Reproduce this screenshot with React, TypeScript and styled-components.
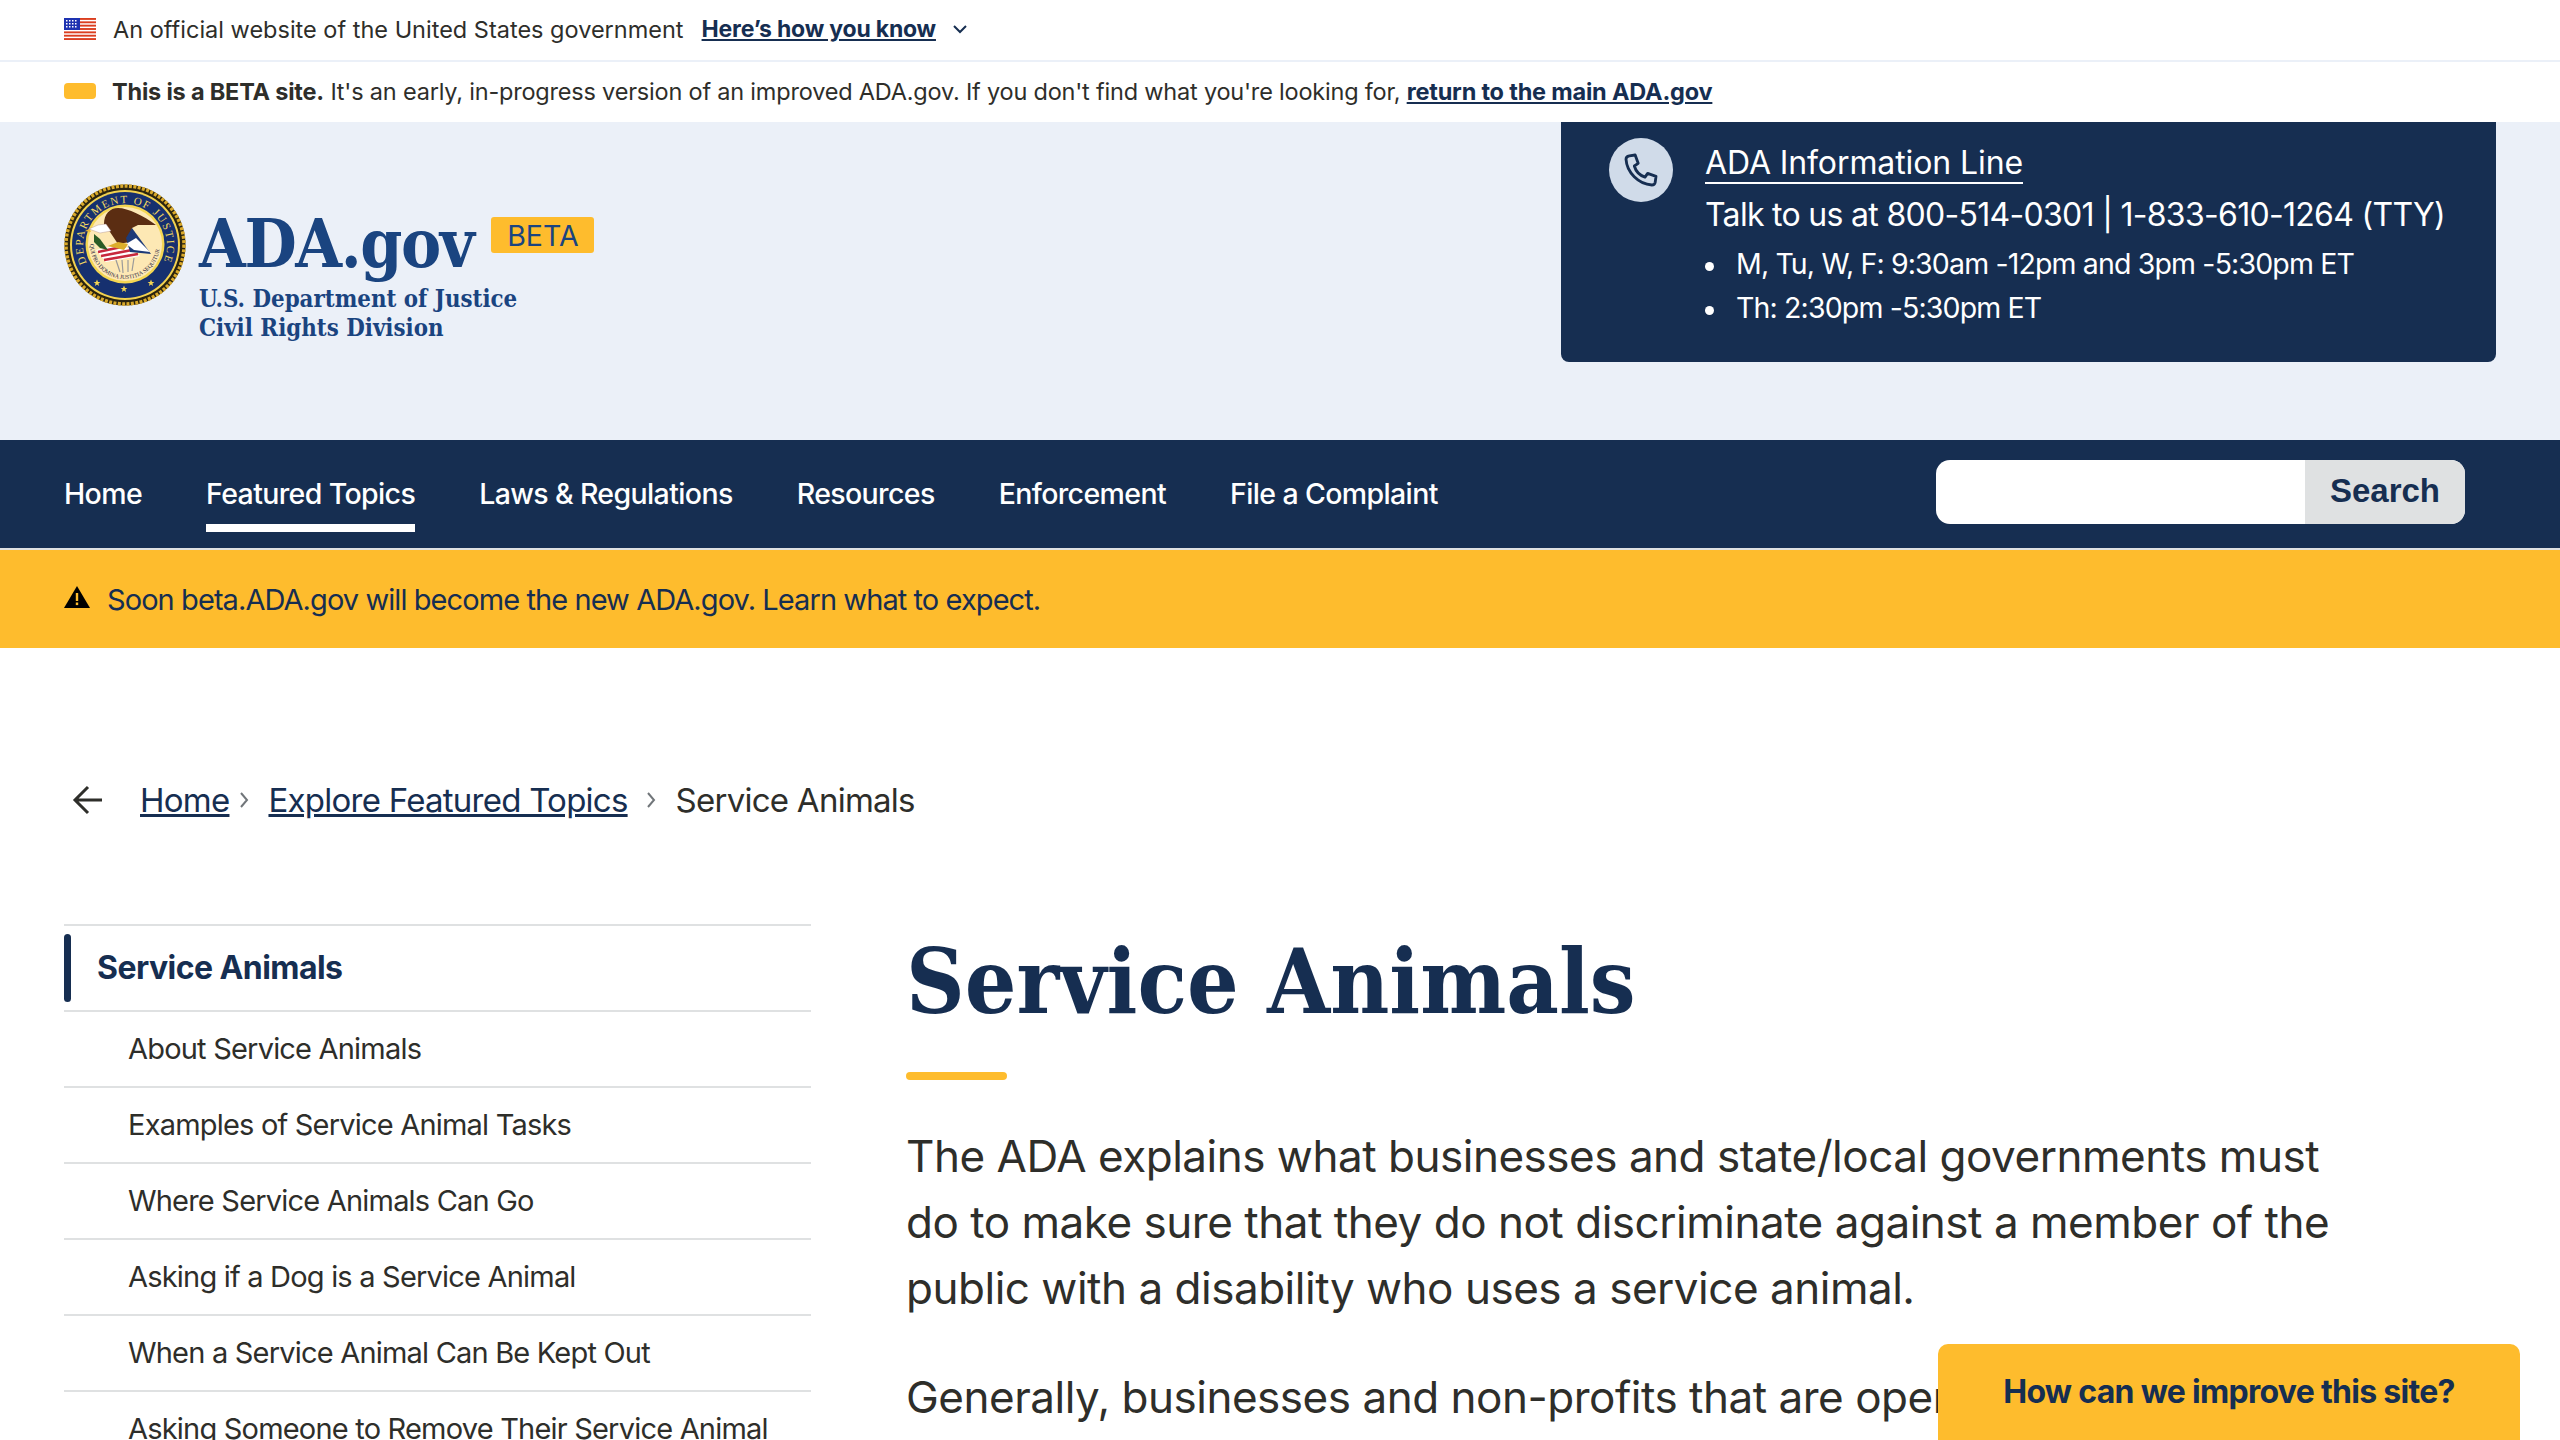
import React from "react";
import styled, { createGlobalStyle } from "styled-components";

const navy = "#162e51";
const gold = "#febc2d";
const ink = "#2e2e2a";
const pale = "#ebf0f8";
const sans = `"Inter", "Liberation Sans", sans-serif`;
const serif = `"DejaVu Serif Condensed", "DejaVu Serif", "Liberation Serif", serif`;

const Global = createGlobalStyle`
  html, body { margin: 0; height: 1440px; overflow: hidden; background: #fff; }
  * { box-sizing: border-box; }
  body { font-family: ${sans}; color: ${ink}; }
`;

const GovBanner = styled.div`
  height: 62px; padding: 0 64px 2px; display: flex; align-items: center;
  border-bottom: 2px solid ${pale}; font-size: 23.5px;
`;
const BannerText = styled.span`margin-left: 17px;`;
const HowLink = styled.a`
  margin-left: 18px; font-weight: 700; color: ${navy}; text-decoration: underline; font-size: 23px;
  letter-spacing: -0.2px;
`;
const Chevron = styled.svg`margin-left: 14px; width: 20px; height: 20px;`;
const BetaBar = styled.div`
  height: 60px; padding: 0 64px 2px; display: flex; align-items: center; font-size: 23.5px; letter-spacing: -0.2px;
`;
const BetaSwatch = styled.span`width: 32px; height: 16px; background: ${gold}; border-radius: 4px; margin-right: 16px;`;
const BetaLink = styled.a`font-weight: 700; color: ${navy}; text-decoration: underline;`;

const Header = styled.header`
  height: 318px; background: ${pale}; padding: 0 64px; display: flex; justify-content: space-between; align-items: flex-start;
`;
const Brand = styled.div`display: flex; padding-top: 62px; align-items: flex-start;`;
const BrandText = styled.div`margin-left: 13px; padding-top: 20px;`;
const TitleRow = styled.div`display: flex; align-items: flex-start;`;
const Wordmark = styled.div`
  font-family: ${serif}; font-weight: 700; font-size: 67px; line-height: 80px; color: #1a4480; letter-spacing: -1.4px;
`;
const BetaBadge = styled.span`
  margin: 13px 0 0 18px; width: 103px; height: 36px; border-radius: 3px; background: ${gold}; color: #1a4480;
  font-size: 28.5px; display: flex; align-items: center; justify-content: center;
`;
const Dept = styled.div`
  font-family: ${serif}; font-weight: 700; font-size: 23.8px; line-height: 29px; color: #1a4480; padding-top: 1px;
`;
const InfoBox = styled.div`
  width: 935px; height: 240px; background: ${navy}; border-radius: 0 0 8px 8px; color: #fff;
  display: flex; padding: 16px 0 0 48px;
`;
const PhoneCircle = styled.div`
  width: 64px; height: 64px; border-radius: 50%; background: #d0dbe9; display: flex; align-items: center; justify-content: center; flex: none;
`;
const InfoBody = styled.div`margin-left: 32px; padding-top: 6px;`;
const InfoTitle = styled.a`
  display: inline-block; font-size: 32px; line-height: 38px; color: #fff; border-bottom: 2px solid #fff; letter-spacing: -0.1px;
`;
const InfoLine = styled.div`font-size: 32px; line-height: 44px; margin-top: 9px; letter-spacing: -0.7px; white-space: nowrap;`;
const Hours = styled.ul`margin: 5px 0 0; padding: 0; list-style: none; font-size: 28.5px; line-height: 44px; letter-spacing: -0.85px;`;
const Hour = styled.li`
  &::before {
    content: ""; display: inline-block; width: 9px; height: 9px; border-radius: 50%; background: #fff;
    margin-right: 22px; vertical-align: middle;
  }
`;

const Nav = styled.nav`
  height: 108px; background: ${navy}; padding: 0 95px 0 64px; display: flex; align-items: flex-start; justify-content: space-between;
`;
const NavList = styled.div`display: flex; gap: 64px;`;
const NavItem = styled.a<{ $active?: boolean }>`
  color: #fff; font-size: 28.5px; font-weight: 500; letter-spacing: -0.62px; display: flex; align-items: center; height: 92px;
  border-bottom: 8px solid ${(p) => (p.$active ? "#fff" : "transparent")}; padding-top: 22px;
`;
const SearchBox = styled.div`
  width: 529px; height: 64px; margin-top: 20px; border-radius: 14px; overflow: hidden; display: flex; background: #fff;
`;
const SearchInput = styled.div`flex: 1;`;
const SearchButton = styled.div`
  width: 160px; background: #dfe1e2; color: ${navy}; font-family: "Liberation Sans", Arial, sans-serif; font-weight: 700; font-size: 33px;
  display: flex; align-items: center; justify-content: center; padding-bottom: 2px;
`;
const Divider = styled.div`height: 2px; background: #dfe1e2;`;
const Alert = styled.div`
  height: 98px; background: ${gold}; padding: 0 64px; display: flex; align-items: center; color: ${navy}; font-size: 29px; letter-spacing: -0.92px;
`;
const AlertIcon = styled.svg`width: 26px; height: 22px; margin-bottom: 4px; flex: none;`;
const AlertText = styled.span`margin-left: 17px;`;
const Breadcrumb = styled.div`
  display: flex; align-items: center; padding: 126px 0 0 72px; height: 178px; font-size: 33px; line-height: 52px; letter-spacing: -0.75px;
`;
const Crumb = styled.a`color: ${navy}; text-decoration: underline;`;
const BackArrow = styled.svg`width: 32px; height: 32px; margin-right: 36px;`;
const Sep = styled.svg<{ $wide?: boolean }>`
  width: 14px; height: 22px; margin: 0 ${(p) => (p.$wide ? "18px" : "17px")} 0 ${(p) => (p.$wide ? "16px" : "8px")};
`;
const Columns = styled.div`
  display: grid; grid-template-columns: 747px 1fr; column-gap: 95px; padding: 98px 64px 0;
`;
const SideNav = styled.div`border-top: 2px solid #dfe1e2;`;
const SideHead = styled.div`
  height: 86px; padding-bottom: 2px; border-bottom: 2px solid #dfe1e2; display: flex; align-items: center; font-size: 32px; font-weight: 700; color: ${navy}; letter-spacing: -0.55px;
`;
const SideBar = styled.span`width: 7px; height: 68px; border-radius: 4px; background: ${navy}; margin: 2px 26px 0 0;`;
const SideItem = styled.div`
  height: 76px; padding: 0 0 2px 64px; border-bottom: 2px solid #dfe1e2; display: flex; align-items: center; font-size: 29px; letter-spacing: -0.8px; color: ${ink}; white-space: nowrap;
`;
const Main = styled.main`width: 1470px;`;
const H1 = styled.h1`
  margin: 0; font-family: ${serif}; font-weight: 700; font-size: 90.4px; line-height: 114px; color: ${navy};
`;
const Rule = styled.div`width: 101px; height: 8px; border-radius: 4px; background: ${gold}; margin-top: 34px;`;
const Lead = styled.p`margin: 43px 0 0; font-size: 44px; line-height: 66px; color: ${ink}; letter-spacing: -0.48px;`;
const Para = styled.p`margin: 43px 0 0; font-size: 44px; line-height: 66px; color: ${ink}; white-space: nowrap; letter-spacing: -0.48px;`;
const Feedback = styled.a`
  position: fixed; right: 40px; bottom: 0; width: 582px; height: 96px; padding-bottom: 2px; background: ${gold}; border-radius: 10px 10px 0 0;
  color: ${navy}; font-size: 32px; font-weight: 700; letter-spacing: -0.7px; display: flex; align-items: center; justify-content: center;
`;
const FlagSvg = styled.svg`flex: none;`;

const Flag = () => (
  <FlagSvg width="32" height="22" viewBox="0 0 32 22">
    {Array.from({ length: 7 }).map((_, i) => (
      <rect key={i} x="0" y={i * 3.35} width="32" height="1.9" fill="#db3e1f" />
    ))}
    <rect width="16" height="12" fill="#1e33b1" />
    {[2, 5, 8, 11].map((x) => [2, 5, 8].map((y) => <rect key={x + "-" + y} x={x} y={y} width="1.5" height="1.5" fill="#fff" />))}
  </FlagSvg>
);

const Seal = () => (
  <svg width="122" height="122" viewBox="0 0 122 122">
    <defs>
      <path id="ring" d="M23 79 A42 42 0 1 1 99 79" />
      <path id="motto" d="M26 60 A35 35 0 0 0 96 60" />
    </defs>
    <circle cx="61" cy="61" r="60.5" fill="#2a2410" />
    <circle cx="61" cy="61" r="59" fill="none" stroke="#d9a92b" strokeWidth="3.5" strokeDasharray="3 1.4" />
    <circle cx="61" cy="61" r="55" fill="#f3d24f" />
    <circle cx="61" cy="61" r="53" fill="#16306f" />
    <circle cx="61" cy="60" r="39.5" fill="#f4d652" />
    <circle cx="61" cy="60" r="37" fill="#fde8b4" />
    <text fontFamily="Liberation Serif, serif" fontSize="11" fill="#f2d860">
      <textPath href="#ring" textLength="166" lengthAdjust="spacing">DEPARTMENT OF JUSTICE</textPath>
    </text>
    <path d="M40 40 C40 30 46 24 54 24 C64 24 80 32 92 41 L74 41 L68 44 L66 58 L54 60 L46 48 Z" fill="#5b2d12" />
    <path d="M25 45 L34 41 L42 40 L47 47 L36 49 Z" fill="#fff" stroke="#a88" strokeWidth="0.4" />
    <path d="M25 45 L21 47 L27 48 Z" fill="#e8b53a" />
    <path d="M32 66 L58 60 L76 72 L42 78 Z" fill="#fff" />
    <path d="M34 68 L62 62 M37 72 L68 66 M40 76 L74 70" stroke="#c8283c" strokeWidth="2.6" />
    <path d="M62 54 L68 44 L87 70 L66 68 Z" fill="#1d3a78" />
    <path d="M62 60 L72 54 L86 68 L70 66 Z" fill="#fff" />
    <path d="M30 50 L36 55 L44 66 L36 64 L30 58 Z" fill="#2a5c25" />
    <path d="M44 62 L60 66 L64 60 L54 58 Z" fill="#dcae2b" />
    <path d="M52 76 L56 88 M58 76 L59 89 M64 76 L64 88 M70 74 L68 87" stroke="#9a9a9a" strokeWidth="1.2" />
    <text fontFamily="Liberation Serif, serif" fontSize="5.8" fill="#272340">
      <textPath href="#motto">QUI PRO DOMINA JUSTITIA SEQUITUR</textPath>
    </text>
    {[33, 60, 87].map((x, i) => (
      <path key={x} transform={`translate(${x} ${i === 1 ? 105 : 99})`} d="M0-3.4 1 -1H3.4L1.4.5 2.1 3 0 1.5-2.1 3-1.4.5-3.4-1H-1Z" fill="#f5d652" />
    ))}
  </svg>
);

const rows = [
  "About Service Animals",
  "Examples of Service Animal Tasks",
  "Where Service Animals Can Go",
  "Asking if a Dog is a Service Animal",
  "When a Service Animal Can Be Kept Out",
  "Asking Someone to Remove Their Service Animal",
];

export default function App() {
  return (
    <>
      <Global />
      <GovBanner>
        <Flag />
        <BannerText>An official website of the United States government</BannerText>
        <HowLink>Here’s how you know</HowLink>
        <Chevron viewBox="0 0 20 20" fill="none" stroke={navy} strokeWidth="2"><path d="M4 7l6 6 6-6" /></Chevron>
      </GovBanner>
      <BetaBar>
        <BetaSwatch />
        <span><b>This is a BETA site.</b> It's an early, in-progress version of an improved ADA.gov. If you don't find what you're looking for, <BetaLink>return to the main ADA.gov</BetaLink></span>
      </BetaBar>
      <Header>
        <Brand>
          <Seal />
          <BrandText>
            <TitleRow>
              <Wordmark>ADA.gov</Wordmark>
              <BetaBadge>BETA</BetaBadge>
            </TitleRow>
            <Dept>U.S. Department of Justice<br />Civil Rights Division</Dept>
          </BrandText>
        </Brand>
        <InfoBox>
          <PhoneCircle>
            <svg width="40" height="40" viewBox="0 0 24 24" fill="none" stroke={navy} strokeWidth="1.7" strokeLinejoin="round">
              <path d="M5 3.5 8.5 3 10.3 8 8 9.6c.8 2.9 3.3 5.6 6.4 6.7L16 14l5 1.8-.5 3.7c-.2 1-1 1.5-2 1.5C10.5 20.5 3.5 13.5 3 5.5c0-1 .9-1.8 2-2Z" />
            </svg>
          </PhoneCircle>
          <InfoBody>
            <InfoTitle>ADA Information Line</InfoTitle>
            <InfoLine>Talk to us at 800-514-0301 | 1-833-610-1264 (TTY)</InfoLine>
            <Hours>
              <Hour>M, Tu, W, F: 9:30am -12pm and 3pm -5:30pm ET</Hour>
              <Hour>Th: 2:30pm -5:30pm ET</Hour>
            </Hours>
          </InfoBody>
        </InfoBox>
      </Header>
      <Nav>
        <NavList>
          <NavItem>Home</NavItem>
          <NavItem $active>Featured Topics</NavItem>
          <NavItem>Laws &amp; Regulations</NavItem>
          <NavItem>Resources</NavItem>
          <NavItem>Enforcement</NavItem>
          <NavItem>File a Complaint</NavItem>
        </NavList>
        <SearchBox>
          <SearchInput />
          <SearchButton>Search</SearchButton>
        </SearchBox>
      </Nav>
      <Divider />
      <Alert>
        <AlertIcon viewBox="0 0 26 22"><path d="M13 0 26 22H0Z" fill="#000" /><rect x="11.8" y="7" width="2.4" height="8" fill={gold} /><rect x="11.8" y="16.5" width="2.4" height="2.6" fill={gold} /></AlertIcon>
        <AlertText>Soon beta.ADA.gov will become the new ADA.gov. Learn what to expect.</AlertText>
      </Alert>
      <Breadcrumb>
        <BackArrow viewBox="0 0 32 32" fill="none" stroke={ink} strokeWidth="3"><path d="M30 16H3M16 3 3 16l13 13" /></BackArrow>
        <Crumb>Home</Crumb>
        <Sep viewBox="0 0 14 22" fill="none" stroke="#71767a" strokeWidth="2"><path d="M4 4l6 7-6 7" /></Sep>
        <Crumb>Explore Featured Topics</Crumb>
        <Sep $wide viewBox="0 0 14 22" fill="none" stroke="#71767a" strokeWidth="2"><path d="M4 4l6 7-6 7" /></Sep>
        <span>Service Animals</span>
      </Breadcrumb>
      <Columns>
        <SideNav>
          <SideHead><SideBar />Service Animals</SideHead>
          {rows.map((r) => <SideItem key={r}>{r}</SideItem>)}
        </SideNav>
        <Main>
          <H1>Service Animals</H1>
          <Rule />
          <Lead>The ADA explains what businesses and state/local governments must do to make sure that they do not discriminate against a member of the public with a disability who uses a service animal.</Lead>
          <Para>Generally, businesses and non-profits that are open to the public</Para>
        </Main>
      </Columns>
      <Feedback>How can we improve this site?</Feedback>
    </>
  );
}
